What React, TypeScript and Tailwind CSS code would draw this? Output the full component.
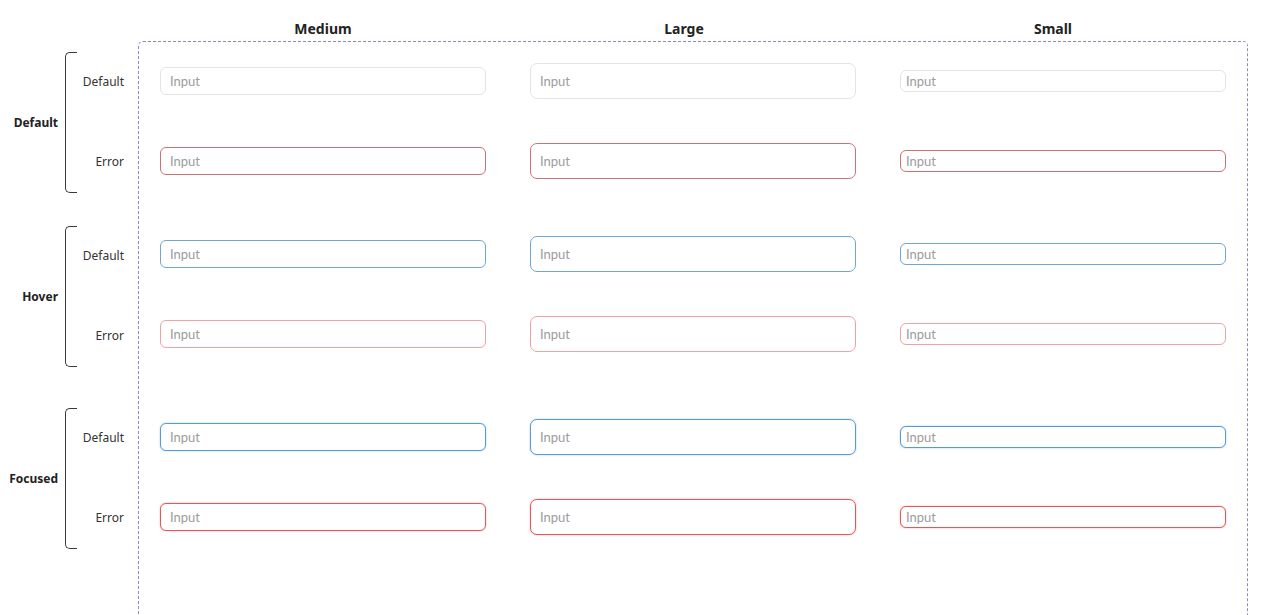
import React from 'react';

type Size = 'medium' | 'large' | 'small';
type State = 'default' | 'error' | 'hover' | 'hoverError' | 'focused' | 'focusedError';

const sizeClass: Record<Size, string> = {
  medium: 'h-[28px] px-[9px] rounded-[6px]',
  large: 'h-[36px] px-[9px] rounded-[7px]',
  small: 'h-[22px] px-[5px] rounded-[6px]',
};

const stateClass: Record<State, string> = {
  default: 'border border-[#e4e4e4]',
  error: 'border-[1.5px] border-[#cb7373]',
  hover: 'border-[1.5px] border-[#6ea6d6]',
  hoverError: 'border-[1.5px] border-[#eda3a3]',
  focused: 'border-[1.5px] border-[#5a9ad2] shadow-[0_0_2px_rgba(90,154,210,0.5)]',
  focusedError: 'border-[1.5px] border-[#e15a5a] shadow-[0_0_2px_rgba(225,90,90,0.5)]',
};

const Field = ({ size, state }: { size: Size; state: State }) => (
  <div className={`flex items-center bg-white ${sizeClass[size]} ${stateClass[state]}`}>
    <span className="text-[13px] text-[#9c9c9c] font-['Lato',sans-serif] leading-none">Input</span>
  </div>
);

const groups: { label: string; states: [State, State]; labelGap: string; boxGap: string }[] = [
  { label: 'Default', states: ['default', 'error'], labelGap: 'mt-[11px]', boxGap: 'mt-[9px]' },
  { label: 'Hover', states: ['hover', 'hoverError'], labelGap: 'mt-[33px]', boxGap: 'mt-[33px]' },
  { label: 'Focused', states: ['focused', 'focusedError'], labelGap: 'mt-[41px]', boxGap: 'mt-[43px]' },
];

const sizes: Size[] = ['medium', 'large', 'small'];

const App = () => {
  return (
    <div className="w-[1264px] h-[615px] overflow-hidden bg-white font-['Noto_Sans',sans-serif] text-[#222]">
      {/* Column headers */}
      <div className="flex pt-[19px] h-[41px]">
        <div className="w-[160px]" />
        <div className="grid grid-cols-[326px_326px_326px] gap-x-[44px] text-[14px] font-bold leading-[20px]">
          <div className="text-center">Medium</div>
          <div className="text-center pr-[18px]">Large</div>
          <div className="text-center pr-[20px]">Small</div>
        </div>
      </div>

      <div className="flex">
        {/* Row labels */}
        <div className="w-[138px] flex flex-col">
          {groups.map((g) => (
            <div key={g.label} className={`flex h-[141px] ${g.labelGap}`}>
              <div className="w-[58px] flex items-center justify-end text-[12px] font-bold">{g.label}</div>
              <div className="ml-[7px] w-[12px] h-full border-l-[1.5px] border-t-[1.5px] border-b-[1.5px] border-[#3a3a3a] rounded-l-[5px]" />
              <div className="w-[47px] flex flex-col pt-[10px] gap-[40px] text-[12px] text-[#333]">
                <div className="h-[40px] flex items-center justify-end">Default</div>
                <div className="h-[40px] flex items-center justify-end">Error</div>
              </div>
            </div>
          ))}
        </div>

        {/* Canvas */}
        <div className="w-[1110px] h-[600px] border border-dashed border-[#8d8ac6] rounded-[5px] px-[21px] flex flex-col">
          {groups.map((g) => (
            <div key={g.label} className={`h-[140px] pt-[10px] flex flex-col gap-[40px] ${g.boxGap}`}>
              {g.states.map((s) => (
                <div key={s} className="h-[40px] grid grid-cols-[326px_326px_326px] gap-x-[44px] items-center">
                  {sizes.map((sz) => (
                    <Field key={sz} size={sz} state={s} />
                  ))}
                </div>
              ))}
            </div>
          ))}
        </div>
      </div>
    </div>
  );
};

export default App;
